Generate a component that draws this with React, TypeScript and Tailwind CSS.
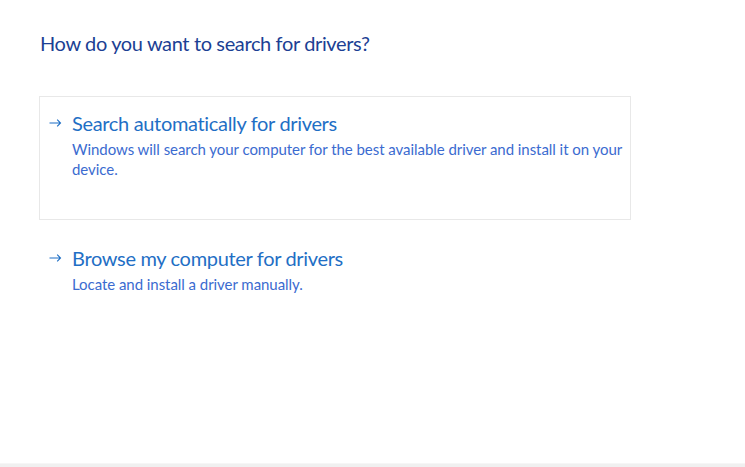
import React from "react";

function Arrow() {
  return (
    <svg width="13" height="10" viewBox="0 0 13 10" className="shrink-0 text-[#1f6fc5]">
      <path d="M0.5 5H11.5M8.2 1.7L11.5 5L8.2 8.3" fill="none" stroke="currentColor" strokeWidth="1.1" />
    </svg>
  );
}

function Option({ title, desc, bordered }: { title: string; desc: string; bordered?: boolean }) {
  return (
    <div
      className={`w-[592px] h-[124px] border ${bordered ? "border-[#e8e8e8]" : "border-transparent"} pl-[9px] pt-[12px] pr-0`}
    >
      <div className="flex items-center gap-[10px] h-[28px]">
        <Arrow />
        <div className="text-[20px] leading-[28px] tracking-[-0.33px] text-[#1f6fc5] whitespace-nowrap">{title}</div>
      </div>
      <div className="pl-[23px] text-[15px] leading-[20px] tracking-[-0.05px] text-[#3b6bd0] mt-[2px]">{desc}</div>
    </div>
  );
}

export default function App() {
  return (
    <div
      className="w-[745px] h-[467px] bg-white flex flex-col overflow-hidden"
      style={{ fontFamily: 'Lato, "Noto Sans", sans-serif' }}
    >
      <div className="flex-1 pl-[39px] pt-[29px]">
        <div className="text-[20px] leading-[28px] tracking-[-0.37px] text-[#1c3f94] pl-[1px]">
          How do you want to search for drivers?
        </div>
        <div className="mt-[39px] flex flex-col gap-[11px]">
          <Option
            bordered
            title="Search automatically for drivers"
            desc="Windows will search your computer for the best available driver and install it on your device."
          />
          <Option title="Browse my computer for drivers" desc="Locate and install a driver manually." />
        </div>
      </div>
      <div className="h-[4px] bg-[#f0f0f0] border-t border-[#f6f6f6]" />
    </div>
  );
}
